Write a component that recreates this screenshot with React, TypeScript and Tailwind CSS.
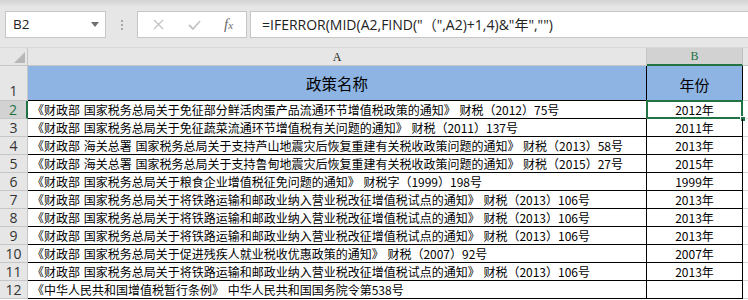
import React from "react";

const rows: [string, string][] = [
  ["《财政部 国家税务总局关于免征部分鲜活肉蛋产品流通环节增值税政策的通知》 财税（2012）75号", "2012年"],
  ["《财政部 国家税务总局关于免征蔬菜流通环节增值税有关问题的通知》 财税（2011）137号", "2011年"],
  ["《财政部 海关总署 国家税务总局关于支持芦山地震灾后恢复重建有关税收政策问题的通知》 财税（2013）58号", "2013年"],
  ["《财政部 海关总署 国家税务总局关于支持鲁甸地震灾后恢复重建有关税收政策问题的通知》 财税（2015）27号", "2015年"],
  ["《财政部 国家税务总局关于粮食企业增值税征免问题的通知》 财税字（1999）198号", "1999年"],
  ["《财政部 国家税务总局关于将铁路运输和邮政业纳入营业税改征增值税试点的通知》 财税（2013）106号", "2013年"],
  ["《财政部 国家税务总局关于将铁路运输和邮政业纳入营业税改征增值税试点的通知》 财税（2013）106号", "2013年"],
  ["《财政部 国家税务总局关于将铁路运输和邮政业纳入营业税改征增值税试点的通知》 财税（2013）106号", "2013年"],
  ["《财政部 国家税务总局关于促进残疾人就业税收优惠政策的通知》 财税（2007）92号", "2007年"],
  ["《财政部 国家税务总局关于将铁路运输和邮政业纳入营业税改征增值税试点的通知》 财税（2013）106号", "2013年"],
  ["《中华人民共和国增值税暂行条例》 中华人民共和国国务院令第538号", ""],
];

export default function App() {
  return (
    <div className="w-[748px] h-[300px] overflow-hidden bg-white font-['Noto_Sans_CJK_SC',sans-serif] text-black">
      {/* Toolbar */}
      <div className="h-[48px] bg-gradient-to-b from-[#d3d3d3] via-[#e6e6e6] via-[15%] to-[#e6e6e6] border-b border-[#d8d8d8] flex items-start pt-[11px] pl-[5px]">
        <div className="w-[101px] h-[27px] bg-white border border-[#c6c6c6] flex items-center justify-between pl-[7px] pr-[6px]">
          <span className="font-['Open_Sans',sans-serif] text-[13.5px] text-[#222] leading-none">B2</span>
          <svg width="8" height="5" viewBox="0 0 8 5">
            <path d="M0 0 L8 0 L4 5 Z" fill="#6f6f6f" />
          </svg>
        </div>
        <div className="w-[31px] h-[27px] flex flex-col items-center justify-center gap-[2px]">
          <div className="w-[2px] h-[2px] bg-[#a8a8a8]" />
          <div className="w-[2px] h-[2px] bg-[#a8a8a8]" />
          <div className="w-[2px] h-[2px] bg-[#a8a8a8]" />
        </div>
        <div className="w-[110px] h-[27px] bg-white border border-[#c6c6c6] flex items-center">
          <div className="w-[40px] flex justify-center">
            <svg width="11" height="11" viewBox="0 0 11 11">
              <path d="M1 1 L10 10 M10 1 L1 10" stroke="#c4c4c4" strokeWidth="1.4" fill="none" />
            </svg>
          </div>
          <div className="w-[33px] flex justify-center">
            <svg width="13" height="10" viewBox="0 0 13 10">
              <path d="M1 5 L5 9 L12 1" stroke="#c4c4c4" strokeWidth="1.8" fill="none" />
            </svg>
          </div>
          <div className="w-[35px] flex justify-center">
            <span className="font-['Liberation_Serif',serif] italic text-[15px] text-[#6a6a6a] leading-none">
              f<span className="text-[11px]">x</span>
            </span>
          </div>
        </div>
        <div className="ml-[3px] flex-1 h-[27px] bg-white border border-[#c6c6c6] border-r-0 flex items-center pl-[11px]">
          <span className="font-['Open_Sans','Noto_Sans_CJK_SC',sans-serif] text-[14px] text-[#222] leading-none whitespace-pre">
            =IFERROR(MID(A2,FIND("（",A2)+1,4)&"年","")
          </span>
        </div>
      </div>

      {/* Sheet */}
      <div className="grid grid-cols-[28px_619px_96px_5px] grid-rows-[18px_35px_repeat(11,18px)]">
        {/* header row */}
        <div className="bg-[#e6e6e6] border-r border-b border-[#c6c6c6] flex items-end justify-end p-[2px]">
          <svg width="11" height="11" viewBox="0 0 11 11">
            <path d="M11 0 L11 11 L0 11 Z" fill="#b7b7b7" />
          </svg>
        </div>
        <div className="bg-[#e6e6e6] border-r border-b border-[#c6c6c6] flex items-center justify-center">
          <span className="font-['Liberation_Serif',serif] text-[12px] text-[#222] leading-none">A</span>
        </div>
        <div className="bg-[#d2d2d2] border-r border-[#bdbdbd] border-b-2 border-b-[#217346] flex items-center justify-center">
          <span className="font-['Liberation_Serif',serif] text-[12px] text-[#217346] leading-none">B</span>
        </div>
        <div className="bg-[#e6e6e6] border-b border-[#c6c6c6]" />

        {/* row 1 */}
        <div className="bg-[#e6e6e6] border-r border-b border-[#c6c6c6] flex items-end justify-center pb-[1px]">
          <span className="font-['Open_Sans',sans-serif] text-[14px] text-[#333] leading-[17px]">1</span>
        </div>
        <div className="bg-[#8db4e2] border-r border-b border-black flex items-center justify-center pt-[2px]">
          <span className="text-[15.5px] leading-none">政策名称</span>
        </div>
        <div className="bg-[#8db4e2] border-r border-b border-black flex items-center justify-center pt-[2px]">
          <span className="text-[15px] leading-none">年份</span>
        </div>
        <div className="border-b border-[#d4d4d4]" />

        {rows.map(([name, year], i) => {
          const sel = i === 0;
          return (
            <React.Fragment key={i}>
              <div
                className={
                  sel
                    ? "bg-[#d2d2d2] border-r-2 border-r-[#217346] border-b border-b-[#c6c6c6] flex items-center justify-center"
                    : "bg-[#e6e6e6] border-r border-b border-[#c6c6c6] flex items-center justify-center"
                }
              >
                <span
                  className={
                    sel
                      ? "font-['Open_Sans',sans-serif] text-[14px] text-[#217346] leading-none pt-[1px]"
                      : "font-['Open_Sans',sans-serif] text-[14px] text-[#333] leading-none pt-[1px]"
                  }
                >
                  {i + 2}
                </span>
              </div>
              <div className="border-r border-b border-black flex items-center pl-[4px] pt-[1px] overflow-hidden whitespace-nowrap">
                <span className="text-[12px] leading-none [word-spacing:1px]">{name}</span>
              </div>
              <div className="relative border-r border-b border-black flex items-center justify-center pt-[1px]">
                <span className="text-[12px] leading-none">{year}</span>
                {sel && (
                  <>
                    <div className="absolute -left-[1px] -top-[1px] -right-[1px] -bottom-[1px] border-2 border-[#217346]" />
                    <div className="absolute -right-[4px] -bottom-[4px] w-[6px] h-[6px] bg-[#217346] border border-white" />
                  </>
                )}
              </div>
              <div className="border-b border-[#d4d4d4]" />
            </React.Fragment>
          );
        })}
      </div>
    </div>
  );
}
